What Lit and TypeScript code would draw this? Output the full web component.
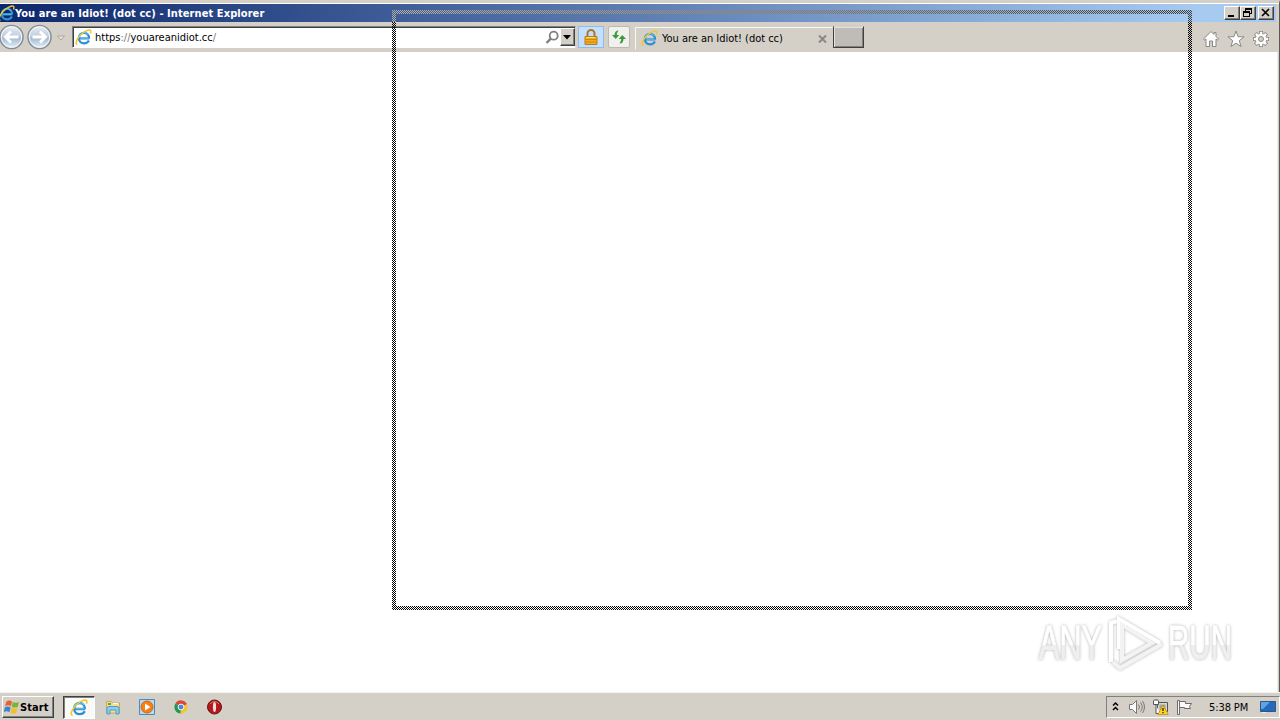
import {LitElement, css, html, svg} from 'lit';
import {customElement, property} from 'lit/decorators.js';

const ieLogo = (size: number) => html`
  <svg width=${size} height=${size} viewBox="0 0 16 16" fill="none">
    <path d="M13.500 8.900H4.200M13.200 8.900C13.200 5.700 11.200 3.600 8.600 3.600 5.700 3.600 3.700 5.700 3.700 8.600c0 2.900 2 4.900 4.900 4.900 2 0 3.600-.9 4.500-2.600" stroke="#2d8ed2" stroke-width="2.100" />
    <path d="M5 8.600h7.700M3.600 8.300C3.900 5.300 6 3.500 8.600 3.300q2.700 0 4 2.300" stroke="#6fcbf2" stroke-width=".9" />
    <path d="M2.300 14.600C-.8 13.800 2.600 7.400 7 4 10.700 1 14.800.1 15 2c.1.700-.1 1.400-.5 2.200" stroke="#efc62c" stroke-width="1.400" />
  </svg>
`;

@customElement('title-bar')
export class TitleBar extends LitElement {
  @property() caption = '';

  static styles = css`
    :host {
      display: flex;
      align-items: center;
      height: 18px;
      background: linear-gradient(90deg, #0c276c, #a6caf0 94%);
      color: #fff;
      font: bold 11px/18px 'DejaVu Sans Condensed', 'DejaVu Sans', sans-serif;
      font-stretch: condensed;
    }

    .logo {
      display: flex;
      margin-left: -2px;
    }

    .caption {
      flex: 1;
      padding-top: 1px;
      white-space: nowrap;
      letter-spacing: 0.08px;
    }

    .buttons {
      display: flex;
      padding-right: 2px;
    }

    .button {
      display: flex;
      box-sizing: border-box;
      width: 16px;
      height: 14px;
      background: #d4d0c8;
      border: 1px solid;
      border-color: #fff #404040 #404040 #fff;
      box-shadow: inset -1px -1px #808080;
    }

    .close {
      margin-left: 2px;
    }
  `;

  render() {
    return html`
      <span class="logo">${ieLogo(17)}</span>
      <span class="caption">${this.caption}</span>
      <div class="buttons">
        <span class="button">
          <svg width="14" height="12"><path d="M3 8h6v2H3z" /></svg>
        </span>
        <span class="button">
          <svg width="14" height="12" fill="none" stroke="#000" shape-rendering="crispEdges">
            <path d="M4.5 4V1.5h6v5H9M4 2h7M2.5 4.5h6v5h-6zM2 5h7" />
          </svg>
        </span>
        <span class="button close">
          <svg width="14" height="12" stroke="#000" stroke-width="1.6">
            <path d="M3 2l7 7M10 2L3 9" />
          </svg>
        </span>
      </div>
    `;
  }
}

@customElement('nav-bar')
export class NavBar extends LitElement {
  @property() url = '';
  @property() tab = '';

  static styles = css`
    :host {
      display: flex;
      align-items: flex-start;
      box-sizing: border-box;
      height: 30px;
      background: #d4d0c8;
      color: #000;
      font: 11px/20px 'DejaVu Sans Condensed', 'DejaVu Sans', sans-serif;
      font-stretch: condensed;
    }

    svg {
      display: block;
      flex: none;
    }

    .history {
      width: 72px;
    }

    .address {
      display: flex;
      align-items: center;
      box-sizing: border-box;
      width: 504px;
      height: 22px;
      margin-top: 4px;
      padding: 0 0 0 2px;
      background: #fff;
      border: 1px solid;
      border-color: #808080 #d4d0c8 #fff #808080;
      box-shadow: inset 1px 1px #404040;
    }

    .url {
      flex: 1;
      margin-left: 3px;
      padding-top: 2px;
      white-space: nowrap;
      letter-spacing: 0;
    }

    .dim {
      color: #777;
    }

    .drop {
      box-sizing: border-box;
      width: 15px;
      height: 18px;
      background: #d4d0c8;
      border: 1px solid;
      border-color: #fff #404040 #404040 #fff;
      box-shadow: inset -1px -1px #808080;
    }

    .tool {
      display: flex;
      align-items: center;
      justify-content: center;
      box-sizing: border-box;
      height: 22px;
      margin-top: 4px;
    }

    .lock {
      width: 26px;
      margin-left: 2px;
      background: #c4e0fc;
      border: 1px solid #8ebcec;
    }

    .refresh {
      width: 22px;
      margin-left: 4px;
      background: #f1f0ed;
      border: 1px solid #bcb9b2;
      border-radius: 2px;
    }

    .tab {
      display: flex;
      align-items: center;
      box-sizing: border-box;
      width: 198px;
      height: 23px;
      margin: 5px 0 0 5px;
      padding-left: 5px;
      border: 1px solid;
      border-color: #f8f7f4 transparent transparent #f8f7f4;
    }

    .label {
      flex: 1;
      margin-left: 4px;
      white-space: nowrap;
      letter-spacing: -0.03px;
    }

    .new-tab {
      box-sizing: border-box;
      width: 31px;
      height: 22px;
      margin-top: 4px;
      background: #bfbbb6;
      border: 1px solid #404040;
      border-top-color: #d4d0c8;
      box-shadow: inset 1px 1px #e4e1dc, inset -1px -1px #808080;
    }

    .commands {
      display: flex;
      gap: 7px;
      margin: 8px 6px 0 auto;
    }
  `;

  renderHistory() {
    return html`
      <svg class="history" height="30" viewBox="0 0 72 30">
        <defs>
          <linearGradient id="glass" x2="0" y2="1">
            <stop offset="0" stop-color="#e9edf2" />
            <stop offset=".45" stop-color="#c3d0de" />
            <stop offset=".55" stop-color="#a5bbd1" />
            <stop offset="1" stop-color="#e8f3fb" />
          </linearGradient>
        </defs>
        ${[11.5, 39.5].map(
          (cx) => svg`
            <circle cx=${cx} cy="15" r="11.6" fill="url(#glass)" stroke="#858c95" stroke-width="1.4" />
            <circle cx=${cx} cy="15" r="10.2" fill="none" stroke="#f3f7fb" />
          `
        )}
        <g fill="none" stroke="#fff" stroke-width="2.8">
          <path d="M18.5 15H6M11 9.5L5.5 15l5.5 5.5" />
          <path d="M32.500 15H45M40 9.5l5.5 5.5-5.5 5.5" />
        </g>
        <path d="M57.5 14h7l-3.5 4z" fill="#e9e6e0" stroke="#aaa69e" />
      </svg>
    `;
  }

  render() {
    const [scheme, host] = this.url.split('://');

    return html`
      ${this.renderHistory()}

      <div class="address">
        ${ieLogo(17)}
        <span class="url">${scheme}<span class="dim">://</span>${host.replace('/', '')}<span class="dim">/</span></span>
        <svg width="15" height="15" fill="none" stroke="#808080">
          <circle cx="8.700" cy="5.700" r="4" stroke-width="1.8" />
          <path d="M5.800 8.700L1.500 13" stroke-width="2.4" />
        </svg>
        <span class="drop">
          <svg width="13" height="16"><path d="M2 6h8L6 10.500z" /></svg>
        </span>
      </div>

      <span class="tool lock">
        <svg width="16" height="18">
          <path d="M4.500 9V5.500a3.500 3.500 0 0 1 7 0V9" fill="none" stroke="#a87a28" stroke-width="2" />
          <path d="M2 8.500h12v8H2z" fill="#f0ab22" stroke="#bd7d15" />
          <path d="M2 11.500h12M2 14h12" stroke="#c98818" />
          <path d="M3 9.500h9" stroke="#ffdb74" />
        </svg>
      </span>
      <span class="tool refresh">
        <svg width="16" height="16" fill="#3a9c3c">
          <path d="M7.500 1.500Q3.700 1.500 3.500 6H1l3.700 4L8.300 6H5.800Q5.800 3.500 7.500 1.500z" />
          <path d="M8.500 14.500q3.800 0 4-4.500H15l-3.700-4L7.700 10h2.500q0 2.500-1.700 4.500z" />
        </svg>
      </span>

      <div class="tab">
        ${ieLogo(17)}
        <span class="label">${this.tab}</span>
        <svg width="15" height="10" stroke="#8b8882" stroke-width="2">
          <path d="M2 1.500l7 7M9 1.500l-7 7" />
        </svg>
      </div>
      <span class="new-tab"></span>

      <div class="commands">
        <svg width="18" height="18" fill="#fff" stroke="#8a8783">
          <path d="M9 1.500L1.500 9l1 1.200L4 9v7.500h3.500V11h3v5.500H14V9l1.500 1.200 1-1.200L14 6.500v-4h-2v2z" />
        </svg>
        <svg width="18" height="18" fill="#fff" stroke="#8a8783">
          <path d="M9 1l2.100 5.700 6 .2-4.800 3.700 1.700 5.900-5-3.400-5 3.400 1.700-5.900L.9 6.900l6-.2z" />
        </svg>
        <svg width="18" height="18" viewBox="-9 -9 18 18">
          ${['#8a8783', '#fff'].map(
            (color, i) => svg`
              <g fill=${color} stroke=${color} stroke-width=${i ? 0 : 1.6}>
                <circle r="5.300" />
                ${[0, 45, 90, 135].map((a) => svg`<path d="M-1.200-7.200h2.400V7.200h-2.400z" transform="rotate(${a})" />`)}
              </g>
            `
          )}
          <circle r="2.500" fill="#d4d0c8" stroke="#8a8783" />
        </svg>
      </div>
    `;
  }
}

@customElement('task-bar')
export class TaskBar extends LitElement {
  @property() time = '';

  static styles = css`
    :host {
      display: flex;
      align-items: flex-start;
      box-sizing: border-box;
      height: 28px;
      padding: 3px 0 0 2px;
      background: #d4d0c8;
      border-top: 1px solid #f4f3f0;
      color: #000;
      font: 11px/20px 'DejaVu Sans Condensed', 'DejaVu Sans', sans-serif;
      font-stretch: condensed;
    }

    svg {
      display: block;
      flex: none;
    }

    .start {
      display: flex;
      align-items: center;
      box-sizing: border-box;
      width: 52px;
      height: 22px;
      padding-left: 1px;
      border: 1px solid;
      border-color: #fff #404040 #404040 #fff;
      box-shadow: inset -1px -1px #808080;
      font-weight: bold;
      letter-spacing: 0.1px;
    }

    .start-label {
      padding-top: 1px;
    }

    .active {
      display: flex;
      align-items: center;
      justify-content: center;
      box-sizing: border-box;
      width: 32px;
      height: 23px;
      margin-left: 9px;
      background: #fafaf8;
      border: 1px solid;
      border-color: #404040 #fff #fff #404040;
      box-shadow: inset 1px 1px #808080;
    }

    .launch {
      display: flex;
      gap: 18px;
      margin: 3px 0 0 10px;
    }

    .tray {
      display: flex;
      align-items: center;
      box-sizing: border-box;
      width: 174px;
      height: 22px;
      margin-left: auto;
      padding-left: 5px;
      border: 1px solid;
      border-color: #808080 #fff #fff #808080;
    }

    .sound {
      margin-left: 7px;
    }

    .network {
      margin-left: 6px;
    }

    .flag {
      margin-left: 7px;
    }

    .time {
      margin-left: 16px;
      padding-top: 2px;
      width: 51px;
      white-space: nowrap;
      letter-spacing: -0.1px;
    }
  `;

  render() {
    return html`
      <div class="start">
        <svg width="16" height="16">
          <path d="M2.500 2.500q3-2 5.500 0L7 7.300Q4.500 5.500 1 7.200z" fill="#e9602d" />
          <path d="M8.800 3q3 1.500 6.200 0l-1.300 5q-3 1.300-5.900-.3z" fill="#76b53a" />
          <path d="M.9 8.200q3-1.600 5.700 0l-1.200 5Q3 11.500-.2 13z" fill="#3b83cf" />
          <path d="M7.500 8.700q3 1.500 6 .3l-1.300 5q-3 1.200-5.900-.4z" fill="#f4bd2d" />
        </svg>
        <span class="start-label">Start</span>
      </div>
      <div class="active">${ieLogo(18)}</div>

      <div class="launch">
        <svg width="16" height="16">
          <path d="M1.500 2.500h5l1 1.500h7v10h-13z" fill="#f5df8c" stroke="#d0aa48" />
          <path d="M3 4h3v2H3z" fill="#4ba657" />
          <path d="M8 4h5v1H8z" fill="#fff" />
          <path d="M2 15V9.500Q2 7.500 4 7.500h8q2 0 2 2V15h-3v-4H5v4z" fill="#8dcdf0" stroke="#4c9dce" />
        </svg>
        <svg width="16" height="16">
          <path d="M.5.500h15v15H.5z" fill="#b9dbf2" stroke="#448cc2" />
          <circle cx="8" cy="8" r="6" fill="#f27f18" stroke="#d8650d" />
          <path d="M6 4.500v7L11.500 8z" fill="#fff" />
        </svg>
        <svg width="16" height="16" viewBox="-8 -8 16 16">
          <path d="M0 0L-5.600-3.500A6.600 6.600 0 0 1 6-2.800z" fill="#dd4636" />
          <path d="M0 0L6-2.800A6.600 6.600 0 0 1-.6 6.600z" fill="#f6c62d" />
          <path d="M0 0L-.6 6.600A6.600 6.600 0 0 1-5.600-3.500z" fill="#25984f" />
          <circle r="2.900" fill="#4286de" stroke="#f4f4f4" />
        </svg>
        <svg width="16" height="16">
          <circle cx="7.500" cy="8" r="7" fill="#b3181a" stroke="#701012" />
          <path d="M3 5q4.500-5 9 0" fill="none" stroke="#df7472" />
          <ellipse cx="7.500" cy="8" rx="1.600" ry="5" fill="#f0dcda" />
        </svg>
      </div>

      <div class="tray">
        <svg width="9" height="14" fill="none" stroke="#000" stroke-width="1.500">
          <path d="M1 5.500l2.500-2.500L6 5.500M1 10l2.500-2.500L6 10" />
        </svg>
        <svg class="sound" width="18" height="16" fill="none" stroke="#777">
          <path d="M1.500 5.500h3l4-4v13l-4-4h-3z" fill="#fafafa" />
          <path d="M10.500 5.500q2 2.500 0 5M12.500 3.500q3.500 4.500 0 9M14.500 2q4 6 0 12" />
        </svg>
        <svg class="network" width="17" height="16">
          <path d="M5.500 3.500h10v9h-10z" fill="#d6d6d6" stroke="#555" />
          <path d="M7.500 5.500h6v5h-6z" fill="#a2a2a2" />
          <path d="M1.500 1.500v4h5v-4M3 0v2M5 0v2M4 6v8.500h4" fill="#fff" stroke="#555" />
          <path d="M11 6l5.200 9.500H5.800z" fill="#ffd51e" stroke="#b68d11" stroke-width=".7" />
          <path d="M11 9v3M11 13v1.300" stroke="#222" stroke-width="1.300" />
        </svg>
        <svg class="flag" width="17" height="16" fill="#fafafa" stroke="#6b6b6b">
          <path d="M1.500 1.500h2v14h-2z" />
          <path d="M3.500 2.500h6v2h6l-2 3 1 2H8.500v-1h-5z" />
        </svg>
        <span class="time">${this.time}</span>
        <svg width="16" height="14">
          <path d="M.5 1.500h15v10H.5z" fill="#2469bd" stroke="#315683" />
          <path d="M1 2h9L3 9H1z" fill="#5ea4e5" />
          <path d="M2 12.500h4" stroke="#eee" />
        </svg>
      </div>
    `;
  }
}

@customElement('app-root')
export class AppRoot extends LitElement {
  static styles = css`
    :host {
      display: flex;
      flex-direction: column;
      position: relative;
      box-sizing: border-box;
      width: 1280px;
      height: 720px;
      overflow: hidden;
      background: #d4d0c8;
    }

    .window {
      display: flex;
      flex-direction: column;
      flex: 1;
      box-sizing: border-box;
      border-top: 3px solid #d4d0c8;
      border-right: 1px solid #5b5955;
      padding: 1px 3px 0 0;
      background: linear-gradient(#fff 1px, #d4d0c8 1px);
    }

    .page {
      flex: 1;
      background: #fff;
      border-right: 1px solid #efede9;
      margin-right: -2px;
    }

    /* drag outline of the window being moved */
    .outline {
      position: absolute;
      left: 392px;
      top: 10px;
    }

    .watermark {
      position: absolute;
      left: 1030px;
      top: 600px;
      filter: drop-shadow(0 0 1.5px rgba(0, 0, 0, 0.3));
      font-family: 'Liberation Sans', sans-serif;
    }
  `;

  render() {
    return html`
      <div class="window">
        <title-bar caption="You are an Idiot! (dot cc) - Internet Explorer"></title-bar>
        <nav-bar url="https://youareanidiot.cc/" tab="You are an Idiot! (dot cc)"></nav-bar>
        <div class="page"></div>
      </div>
      <task-bar time="5:38 PM"></task-bar>

      <svg class="outline" width="800" height="600" shape-rendering="crispEdges">
        <defs>
          <pattern id="checker" width="2" height="2" patternUnits="userSpaceOnUse">
            <path d="M0 0h1v1H0zM1 1h1v1H1z" fill="#fff" />
          </pattern>
          <mask id="dither" maskUnits="userSpaceOnUse" x="0" y="0" width="800" height="600">
            <path d="M0 0h800v600H0z" fill="url(#checker)" />
          </mask>
          <linearGradient id="ink">
            <stop offset="0" stop-color="#b3b19c" />
            <stop offset=".5" stop-color="#84826f" />
            <stop offset="1" stop-color="#403c34" />
          </linearGradient>
        </defs>
        <g mask="url(#dither)">
          <path d="M0 0h800v12h-4V4H4v8H0z" fill="url(#ink)" />
          <path d="M0 12h4v584h792V12h4v588H0z" />
        </g>
      </svg>

      <svg class="watermark" width="250" height="85">
        <defs>
          <linearGradient id="fade" x2="0" y2="1">
            <stop offset=".55" stop-color="#fff" />
            <stop offset=".55" stop-color="#efefef" />
          </linearGradient>
        </defs>
        <g fill="url(#fade)" stroke="url(#fade)" font-size="49">
          <text x="9" y="59" textLength="63" lengthAdjust="spacingAndGlyphs">ANY</text>
          <text x="138" y="59" textLength="64" lengthAdjust="spacingAndGlyphs">RUN</text>
        </g>
        <g fill="none" stroke-width="4">
          <path d="M81 62V23l6-2M89 49V19l41 24" stroke="#fff" />
          <path d="M92 25v35l30-17zM83 62l7 6 42-24" stroke="#f3f3f3" />
        </g>
      </svg>
    `;
  }
}
